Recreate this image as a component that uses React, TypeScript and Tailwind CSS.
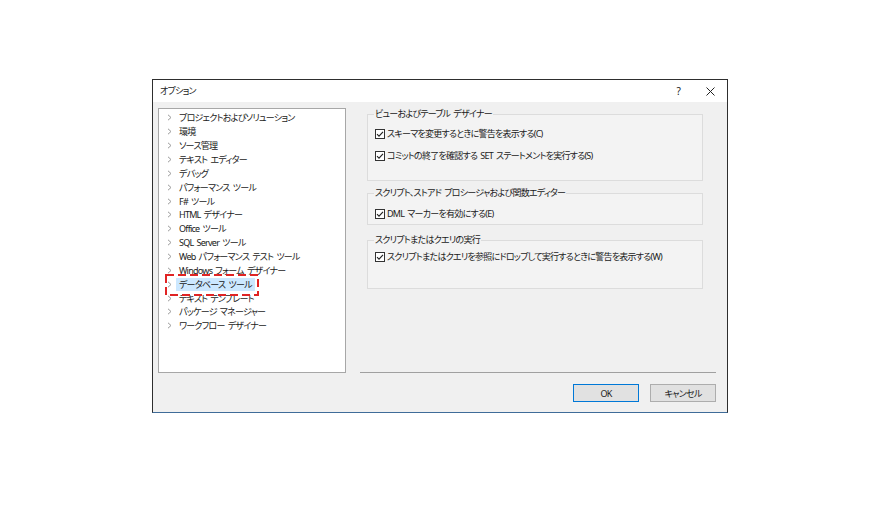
import React from "react";

const FONT = "font-['Noto_Sans','Noto_Sans_CJK_JP',sans-serif] [font-feature-settings:'palt']";

const TREE_ITEMS = [
  "プロジェクトおよびソリューション",
  "環境",
  "ソース管理",
  "テキスト エディター",
  "デバッグ",
  "パフォーマンス ツール",
  "F# ツール",
  "HTML デザイナー",
  "Office ツール",
  "SQL Server ツール",
  "Web パフォーマンス テスト ツール",
  "Windows フォーム デザイナー",
  "データベース ツール",
  "テキスト テンプレート",
  "パッケージ マネージャー",
  "ワークフロー デザイナー",
];

const SELECTED = 12;

function Chevron() {
  return (
    <svg width="5" height="7" viewBox="0 0 5 7" className="shrink-0">
      <path d="M1 0.8 L4 3.5 L1 6.2" fill="none" stroke="#9a9a9a" strokeWidth="1" />
    </svg>
  );
}

function CheckBox() {
  return (
    <svg width="10" height="10" viewBox="0 0 10 10" className="shrink-0">
      <rect x="0.5" y="0.5" width="9" height="9" fill="#fff" stroke="#333" strokeWidth="1" />
      <path d="M2 5.2 L4 7.2 L8 2.8" fill="none" stroke="#222" strokeWidth="1.1" />
    </svg>
  );
}

function CheckRow({ label, className }: { label: string; className?: string }) {
  return (
    <div className={`flex items-center h-[14px] pl-[7px] gap-[2px] ${className ?? ""}`}>
      <CheckBox />
      <span className="whitespace-nowrap">{label}</span>
    </div>
  );
}

function Group({
  title,
  className,
  children,
}: {
  title: string;
  className?: string;
  children: React.ReactNode;
}) {
  return (
    <fieldset className={`ml-[7px] w-[336px] border border-[#dcdcdc] bg-[#f3f3f3] ${className ?? ""}`}>
      <legend className="ml-[6px] px-[1px] leading-[12px] whitespace-nowrap">{title}</legend>
      {children}
    </fieldset>
  );
}

export default function App() {
  return (
    <div
      className={`w-full h-[508px] bg-white pl-[152px] pt-[79px] text-[9px] tracking-[-0.75px] [word-spacing:1.5px] text-[#1a1a1a] ${FONT}`}
    >
      <div className="w-[576px] h-[334px] border border-[#2e2e2e] border-b-[#3f6c99] flex flex-col">
        {/* Title bar */}
        <div className="h-[22px] bg-white flex items-center pl-[7px] shrink-0">
          <span>オプション</span>
          <span className="ml-auto mr-[26px] text-[10px]">?</span>
          <svg width="9" height="9" viewBox="0 0 9 9" className="mr-[12px]">
            <path d="M0.5 0.5 L8.5 8.5 M8.5 0.5 L0.5 8.5" stroke="#222" strokeWidth="1" />
          </svg>
        </div>

        {/* Body */}
        <div className="flex-1 bg-[#f0f0f0] flex pl-[5px] pt-[6px] pr-[10px]">
          {/* Tree */}
          <div className="relative w-[188px] h-[265px] border border-[#a7a7a7] bg-white pt-[2px] shrink-0">
            {TREE_ITEMS.map((item, i) => (
              <div key={item} className="flex items-center h-[13.87px] pl-[8px]">
                <Chevron />
                <span
                  className={`ml-[4px] px-[3px] h-[13px] leading-[13px] whitespace-nowrap ${
                    i === SELECTED ? "bg-[#cce8ff]" : ""
                  }`}
                >
                  {item}
                </span>
              </div>
            ))}
            <svg className="absolute left-[6px] top-[165px]" width="94" height="22" viewBox="0 0 94 22">
              <rect
                x="1"
                y="1"
                width="92"
                height="20"
                fill="none"
                stroke="#e02424"
                strokeWidth="2"
                strokeDasharray="8 4"
              />
            </svg>
          </div>

          {/* Right side */}
          <div className="ml-[14px] w-[356px] flex flex-col pb-[10px]">
            <Group title="ビューおよびテーブル デザイナー" className="h-[73px]">
              <CheckRow label="スキーマを変更するときに警告を表示する(C)" className="mt-[7px]" />
              <CheckRow label="コミットの終了を確認する SET ステートメントを実行する(S)" className="mt-[8px]" />
            </Group>
            <Group title="スクリプト、ストアド プロシージャおよび関数エディター" className="h-[38px] mt-[6px]">
              <CheckRow label="DML マーカーを有効にする(E)" className="mt-[8px]" />
            </Group>
            <Group title="スクリプトまたはクエリの実行" className="h-[55px] mt-[9px]">
              <CheckRow
                label="スクリプトまたはクエリを参照にドロップして実行するときに警告を表示する(W)"
                className="mt-[4px]"
              />
            </Group>

            <div className="flex-1" />
            <div className="h-px bg-[#a0a0a0]" />
            <div className="flex justify-end gap-[11px] mt-[11px]">
              <button
                type="button"
                className="w-[66px] h-[18px] border border-[#0078d7] bg-[#e1e1e1] leading-none"
              >
                OK
              </button>
              <button
                type="button"
                className="w-[66px] h-[18px] border border-[#adadad] bg-[#e1e1e1] leading-none"
              >
                キャンセル
              </button>
            </div>
          </div>
        </div>
      </div>
    </div>
  );
}
